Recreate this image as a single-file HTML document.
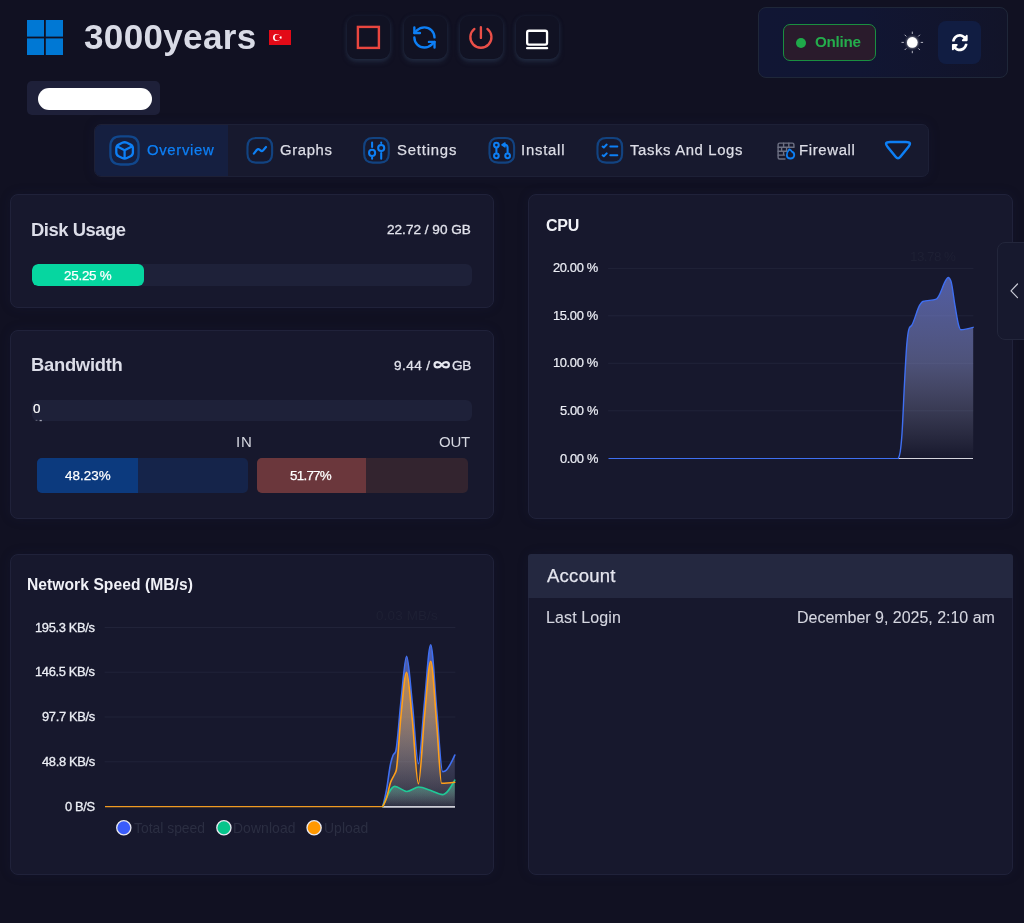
<!DOCTYPE html>
<html lang="en">
<head>
<meta charset="utf-8">
<title>3000years</title>
<style>
*{box-sizing:border-box;margin:0;padding:0}
html,body{width:1024px;height:923px;overflow:hidden}
body{background:#111122;font-family:"Liberation Sans",sans-serif;color:#dcdde8;position:relative}
.abs{position:absolute}
.card{z-index:0}.track{z-index:1}#ov{z-index:2}.t{z-index:3}
.t{position:absolute;white-space:nowrap;line-height:1;will-change:transform}
.card{position:absolute;background:#17182d;border:1px solid #20223a;border-radius:8px;box-shadow:0 0 12px rgba(28,36,78,.16)}
/* header */
#logo{left:27px;top:20px;width:36px;height:35px}
#flag{left:269px;top:30px;width:22px;height:15px}
.hbtn{position:absolute;top:16px;width:43px;height:43px;border-radius:9px;background:#111223;box-shadow:0 3px 5px 0 rgba(46,62,88,.5),0 0 4px rgba(46,62,88,.3)}
.hbtn svg{position:absolute;left:0;top:0}
#ipbox{left:27px;top:81px;width:133px;height:34px;background:#1e2039;border-radius:5px}
#ipblob{left:38px;top:88px;width:114px;height:22px;background:#fff;border-radius:11px}
#rpanel{left:758px;top:7px;width:250px;height:71px;border-radius:8px;border:1px solid #1f2739;background:linear-gradient(90deg,#111634 0%,#111633 40%,#121429 100%)}
#online{left:782.5px;top:24px;width:93.5px;height:37px;border:1px solid #1a8f40;border-radius:7px;background:#2a1b2c}
#odot{left:796px;top:37.5px;width:10px;height:10px;border-radius:50%;background:#1fa94a}
#refbtn{left:938px;top:21px;width:43px;height:43px;border-radius:8px;background:#111d42}
/* nav */
#nav{left:94px;top:124px;width:835px;height:53px;border-radius:7px;background:#17192e;border:1px solid #1d2036;overflow:hidden;box-shadow:0 0 12px rgba(28,36,78,.18)}
#navact{left:0;top:0;width:133px;height:53px;background:#151f40}
/* cards */
.track{position:absolute;background:#1e2139;border-radius:6px;overflow:hidden}
</style>
</head>
<body>

<!-- ===== header ===== -->
<svg id="logo" class="abs" viewBox="0 0 36 35"><g fill="#0078d4"><rect x="0" y="0" width="17" height="16.6"/><rect x="18.8" y="0" width="17.2" height="16.6"/><rect x="0" y="18.4" width="17" height="16.6"/><rect x="18.8" y="18.4" width="17.2" height="16.6"/></g></svg>
<svg id="flag" class="abs" viewBox="0 0 22 15"><rect width="22" height="15" fill="#e30a17"/><circle cx="7.6" cy="7.5" r="3.6" fill="#fff"/><circle cx="8.6" cy="7.5" r="2.9" fill="#e30a17"/><path d="M9.95 7.50 L11.13 7.09 L11.16 5.84 L11.92 6.83 L13.12 6.47 L12.40 7.50 L13.12 8.53 L11.92 8.17 L11.16 9.16 L11.13 7.91Z" fill="#fff"/></svg>

<div class="hbtn" style="left:347px"><svg width="43" height="43" viewBox="0 0 43 43"><rect x="10.9" y="10.9" width="21" height="21" fill="none" stroke="#e9463f" stroke-width="2.4"/></svg></div>
<div class="hbtn" style="left:403.5px"><svg width="43" height="43" viewBox="0 0 43 43"></svg></div>
<div class="hbtn" style="left:459.5px"><svg width="43" height="43" viewBox="0 0 43 43"></svg></div>
<div class="hbtn" style="left:516px"><svg width="43" height="43" viewBox="0 0 43 43"></svg></div>

<div id="ipbox" class="abs"></div>
<div id="ipblob" class="abs"></div>

<div id="rpanel" class="abs"></div>
<div id="online" class="abs"></div>
<div id="odot" class="abs"></div>
<div id="refbtn" class="abs"></div>

<!-- ===== nav ===== -->
<div id="nav" class="abs"><div id="navact" class="abs"></div></div>

<!-- ===== disk card ===== -->
<div class="card" style="left:10px;top:194px;width:484px;height:114px"></div>
<div class="track" style="left:32px;top:264px;width:439.5px;height:22px"><div class="abs" style="left:0;top:0;width:111.5px;height:22px;background:#06d6a0;border-radius:6px"></div></div>

<!-- ===== bandwidth card ===== -->
<div class="card" style="left:10px;top:330px;width:484px;height:189px"></div>
<div class="track" style="left:32px;top:399.5px;width:439.5px;height:21.5px"></div>
<div class="track" style="left:37px;top:458px;width:211px;height:34.5px;background:#15244a;border-radius:5px"><div class="abs" style="left:0;top:0;width:101px;height:100%;background:#0c3a7e"></div></div>
<div class="track" style="left:256.5px;top:458px;width:211px;height:34.5px;background:#33242f;border-radius:5px"><div class="abs" style="left:0;top:0;width:109.5px;height:100%;background:#6b373c"></div></div>

<!-- ===== cpu card ===== -->
<div class="card" style="left:528px;top:194px;width:484.5px;height:325px"></div>

<!-- ===== network card ===== -->
<div class="card" style="left:10px;top:554px;width:484px;height:321px"></div>

<!-- ===== account card ===== -->
<div class="card" style="left:528px;top:554px;width:484.5px;height:321px"></div>
<div class="track" style="left:528px;top:553.8px;width:484.5px;height:43.8px;background:#242840;border-radius:3px 3px 0 0"></div>

<svg id="ov" class="abs" style="left:0;top:0" width="1024" height="923" viewBox="0 0 1024 923" fill="none" stroke-linecap="round" stroke-linejoin="round">
<g transform="translate(411.0,24.0) scale(1.12)" stroke="#0d7ff5" stroke-width="2.1"><path d="M21 12a9 9 0 0 0-9-9 9.75 9.75 0 0 0-6.74 2.74L3 8"/><path d="M3 3v5h5"/><path d="M3 12a9 9 0 0 0 9 9 9.75 9.75 0 0 0 6.74-2.74L21 16"/><path d="M16 16h5v5"/></g>
<path d="M487.40 28.89 A10.55 10.55 0 1 1 474.40 28.89" stroke="#ea4f48" stroke-width="2.35"/><path d="M480.9 27.1 V37.900000000000006" stroke="#ea4f48" stroke-width="2.35"/>
<rect x="527.15" y="30.75" width="19.9" height="13.9" rx="1.8" stroke="#fff" stroke-width="2.3"/><path d="M527.1 48.2 H547.1" stroke="#fff" stroke-width="2.3"/>
<circle cx="912.3" cy="42.4" r="5.3" fill="#fff" stroke="none" style="filter:drop-shadow(0 0 1.5px rgba(255,255,255,.8))"/><g stroke="#e8e8f0" stroke-opacity=".8" stroke-width="0.95"><path d="M921.10 42.40 L922.70 42.40"/><path d="M918.52 48.62 L919.65 49.75"/><path d="M912.30 51.20 L912.30 52.80"/><path d="M906.08 48.62 L904.95 49.75"/><path d="M903.50 42.40 L901.90 42.40"/><path d="M906.08 36.18 L904.95 35.05"/><path d="M912.30 33.60 L912.30 32.00"/><path d="M918.52 36.18 L919.65 35.05"/></g>
<g id="ref" transform="translate(951.68,33.64) scale(0.0317,0.035)" fill="#fff" stroke="none"><path d="M370.72 133.28C339.458 104.008 298.888 87.962 255.848 88c-77.458.068-144.328 53.178-162.791 126.85-1.344 5.363-6.122 9.15-11.651 9.15H24.103c-7.498 0-13.194-6.807-11.807-14.176C33.933 94.924 134.813 8 256 8c66.448 0 126.791 26.136 171.315 68.685L463.03 40.97C478.149 25.851 504 36.559 504 57.941V192c0 13.255-10.745 24-24 24H345.941c-21.382 0-32.09-25.851-16.971-40.971l41.75-41.749zM32 296h134.059c21.382 0 32.09 25.851 16.971 40.971l-41.75 41.75c31.262 29.273 71.835 45.319 114.876 45.28 77.418-.07 144.315-53.144 162.787-126.849 1.344-5.363 6.122-9.15 11.651-9.15h57.304c7.498 0 13.194 6.807 11.807 14.176C478.067 417.076 377.187 504 256 504c-66.448 0-126.791-26.136-171.315-68.685L48.97 471.03C33.851 486.149 8 475.441 8 454.059V320c0-13.255 10.745-24 24-24z"/></g>
<!--NAV-->
<path d="M110.40 146.45 C110.40 139.75 113.85 136.30 120.55 136.30 H128.45 C135.15 136.30 138.60 139.75 138.60 146.45 V154.35 C138.60 161.05 135.15 164.50 128.45 164.50 H120.55 C113.85 164.50 110.40 161.05 110.40 154.35 Z" stroke="#0d7ff5" stroke-opacity=".42" stroke-width="2.3"/>
<path d="M122.26 142.84 Q124.60 141.70 126.94 142.84 L130.56 144.61 Q132.90 145.75 132.90 148.35 L132.90 152.45 Q132.90 155.05 130.56 156.19 L126.94 157.96 Q124.60 159.10 122.26 157.96 L118.64 156.19 Q116.30 155.05 116.30 152.45 L116.30 148.35 Q116.30 145.75 118.64 144.61 Z M116.90 146.15 L124.6 150.20000000000002 L132.30 146.15 M124.6 150.20000000000002 V158.70" stroke="#0d7ff5" stroke-width="2.3"/>
<path d="M247.48 146.85 C247.48 140.99 250.49 137.98 256.35 137.98 H263.25 C269.11 137.98 272.12 140.99 272.12 146.85 V153.75 C272.12 159.61 269.11 162.62 263.25 162.62 H256.35 C250.49 162.62 247.48 159.61 247.48 153.75 Z" stroke="#0d7ff5" stroke-opacity=".42" stroke-width="2.1"/>
<path d="M253.9 153.7 L256.7 150 Q258 148.3 259.5 149.6 L260.4 150.4 Q261.8 151.7 263.2 150.2 L266 147" stroke="#0d7ff5" stroke-width="2.2"/>
<path d="M364.12 146.85 C364.12 140.99 367.14 137.98 373.00 137.98 H379.90 C385.76 137.98 388.77 140.99 388.77 146.85 V153.75 C388.77 159.61 385.76 162.62 379.90 162.62 H373.00 C367.14 162.62 364.12 159.61 364.12 153.75 Z" stroke="#0d7ff5" stroke-opacity=".42" stroke-width="2.1"/>
<g stroke="#0d7ff5" stroke-width="2.05"><path d="M372.1 142.4 V147 M372.1 157.6 V158.7"/><circle cx="372.1" cy="152.9" r="3.05"/><path d="M381.2 142.4 V143 M381.2 153 V158.7"/><circle cx="381.2" cy="148" r="3.05"/></g>
<path d="M489.48 146.85 C489.48 140.99 492.49 137.98 498.35 137.98 H505.25 C511.11 137.98 514.12 140.99 514.12 146.85 V153.75 C514.12 159.61 511.11 162.62 505.25 162.62 H498.35 C492.49 162.62 489.48 159.61 489.48 153.75 Z" stroke="#0d7ff5" stroke-opacity=".42" stroke-width="2.1"/>
<g stroke="#0d7ff5" stroke-width="2.05"><circle cx="496.4" cy="145.1" r="2.35"/><circle cx="496.4" cy="155.8" r="2.35"/><path d="M496.4 148.4 V152.6"/><circle cx="507.6" cy="155.8" r="2.35"/><path d="M507.6 152.6 V147.6 Q507.6 144.8 504.9 144.8 H504"/><path d="M505 142.9 L501.9 144.8 L505 146.9 Z" fill="#0d7ff5" stroke-width="1.4"/></g>
<path d="M597.47 146.85 C597.47 140.99 600.49 137.98 606.35 137.98 H613.25 C619.11 137.98 622.12 140.99 622.12 146.85 V153.75 C622.12 159.61 619.11 162.62 613.25 162.62 H606.35 C600.49 162.62 597.47 159.61 597.47 153.75 Z" stroke="#0d7ff5" stroke-opacity=".42" stroke-width="2.1"/>
<g stroke="#0d7ff5" stroke-width="2.05"><path d="M602.6 146.5 L603.8 147.4 L606.7 144.6 M610.3 146.5 H617.3 M602.6 155.3 L603.8 156.3 L606.7 153.4 M610.3 155.3 H617.3"/></g>
<!--/NAV-->
<g stroke="#6d7082" stroke-width="1.4"><path d="M785 159 H779.6 Q778.1 159 778.1 157.5 V144.6 Q778.1 143.1 779.6 143.1 H792.4 Q793.9 143.1 793.9 144.6 V147"/><path d="M778.1 147.2 H793.9 M778.1 151.2 H787 M778.1 155.1 H784.5 M783.6 143.1 V147.2 M788.8 143.1 V147.2 M781.6 147.2 V151.2 M786.6 147.2 V151.2 M783.6 151.2 V155.1"/></g>
<path id="flame" d="M789.3 149.3 Q791.3 150.3 791.9 151.6 Q794.6 152.6 794.2 155.6 Q793.7 158.5 790.5 158.5 Q787.1 158.5 786.8 155.4 Q786.6 152.6 789.3 149.3 Z" stroke="#0d7ff5" stroke-width="1.8" fill="#17192e"/>
<path id="tri" d="M887.67 146.96 Q883.60 141.90 890.10 141.90 L905.90 141.90 Q912.40 141.90 908.33 146.96 L900.38 156.84 Q898.00 159.80 895.62 156.84 Z" stroke="#0d7ff5" stroke-width="2.5"/>
<path id="inf" d="M441.7 364.8 C439.9 362.3 438.6 362.2 437.4 362.2 C435.6 362.2 434.5 363.4 434.5 364.8 C434.5 366.2 435.6 367.4 437.4 367.4 C438.6 367.4 439.9 367.3 441.7 364.8 C443.5 362.3 444.8 362.2 446 362.2 C447.8 362.2 448.9 363.4 448.9 364.8 C448.9 366.2 447.8 367.4 446 367.4 C444.8 367.4 443.5 367.3 441.7 364.8 Z" stroke="#e6e7ef" stroke-width="2.2"/>
<g id="pdots" stroke="none"><rect x="35.6" y="419.8" width="1.8" height="1.2" fill="#8a8ca0" opacity=".55"/><rect x="39.6" y="419.9" width="2.2" height="1.3" fill="#c8c9d6" opacity=".8"/></g>
<!--CHARTS-->
<path d="M608.5 268.4 H973" stroke="#212339" stroke-width="1"/>
<path d="M608.5 315.8 H973" stroke="#212339" stroke-width="1"/>
<path d="M608.5 363.3 H973" stroke="#212339" stroke-width="1"/>
<path d="M608.5 410.8 H973" stroke="#212339" stroke-width="1"/>
<defs><linearGradient id="gc" x1="0" y1="277" x2="0" y2="458.5" gradientUnits="userSpaceOnUse"><stop offset="0" stop-color="#6f80e0" stop-opacity=".66"/><stop offset=".45" stop-color="#8f98d8" stop-opacity=".46"/><stop offset="1" stop-color="#c8c8dc" stop-opacity=".0"/></linearGradient></defs>
<path d="M898.20 458.50 C898.87 457.42 899.53 456.33 900.20 452.00 C900.80 448.10 901.40 442.50 902.00 433.80 C902.80 422.21 903.60 399.90 904.40 385.00 C905.20 370.10 906.00 353.88 906.80 344.40 C907.63 334.53 908.47 329.81 909.30 328.00 C910.07 326.33 910.83 326.57 911.60 325.50 C914.33 321.68 917.07 309.17 919.80 305.00 C920.80 303.48 921.80 301.84 922.80 301.50 C927.28 299.97 931.77 300.73 936.25 299.20 C937.03 298.93 937.82 297.45 938.60 296.30 C941.07 292.68 943.53 283.41 946.00 280.00 C946.73 278.99 947.47 277.50 948.20 277.50 C949.10 277.50 950.00 278.67 950.90 281.00 C952.27 284.54 953.63 297.94 955.00 305.60 C956.33 313.08 957.67 322.60 959.00 326.50 C959.53 328.06 960.07 329.70 960.60 329.70 C964.80 329.70 969.00 328.50 973.20 327.30 V458.5 H898.2 Z" fill="url(#gc)" stroke="none"/>
<path d="M898.2 458.5 H973" stroke="#d4d4dc" stroke-width="1.2" stroke-linecap="butt"/>
<path d="M608.5 458.5 H898.2" stroke="#3f6ff2" stroke-width="1.1" stroke-linecap="butt"/>
<path d="M898.20 458.50 C898.87 457.42 899.53 456.33 900.20 452.00 C900.80 448.10 901.40 442.50 902.00 433.80 C902.80 422.21 903.60 399.90 904.40 385.00 C905.20 370.10 906.00 353.88 906.80 344.40 C907.63 334.53 908.47 329.81 909.30 328.00 C910.07 326.33 910.83 326.57 911.60 325.50 C914.33 321.68 917.07 309.17 919.80 305.00 C920.80 303.48 921.80 301.84 922.80 301.50 C927.28 299.97 931.77 300.73 936.25 299.20 C937.03 298.93 937.82 297.45 938.60 296.30 C941.07 292.68 943.53 283.41 946.00 280.00 C946.73 278.99 947.47 277.50 948.20 277.50 C949.10 277.50 950.00 278.67 950.90 281.00 C952.27 284.54 953.63 297.94 955.00 305.60 C956.33 313.08 957.67 322.60 959.00 326.50 C959.53 328.06 960.07 329.70 960.60 329.70 C964.80 329.70 969.00 328.50 973.20 327.30" stroke="#3f6ff2" stroke-width="1.4"/>
<path d="M105 627.5 H455" stroke="#212339" stroke-width="1"/>
<path d="M105 672.2 H455" stroke="#212339" stroke-width="1"/>
<path d="M105 717 H455" stroke="#212339" stroke-width="1"/>
<path d="M105 761.8 H455" stroke="#212339" stroke-width="1"/>
<defs><linearGradient id="gb" x1="0" y1="644" x2="0" y2="806" gradientUnits="userSpaceOnUse"><stop offset="0" stop-color="#5f78e8" stop-opacity=".75"/><stop offset="1" stop-color="#c0c0d8" stop-opacity=".05"/></linearGradient><linearGradient id="go" x1="0" y1="661" x2="0" y2="806" gradientUnits="userSpaceOnUse"><stop offset="0" stop-color="#f59a1a" stop-opacity=".75"/><stop offset="1" stop-color="#c8c0c0" stop-opacity=".05"/></linearGradient><linearGradient id="gg" x1="0" y1="780" x2="0" y2="806" gradientUnits="userSpaceOnUse"><stop offset="0" stop-color="#20c997" stop-opacity=".6"/><stop offset="1" stop-color="#b0c8c0" stop-opacity=".05"/></linearGradient></defs>
<path d="M382.80 806.60 C384.03 801.63 385.27 796.66 386.50 790.00 C387.87 782.62 389.23 769.88 390.60 763.70 C391.40 760.08 392.20 757.52 393.00 755.50 C393.90 753.23 394.80 754.13 395.70 751.40 C397.43 746.14 399.17 717.24 400.90 702.00 C402.80 685.29 404.70 656.30 406.60 656.30 C408.47 656.30 410.33 685.18 412.20 702.00 C414.27 720.62 416.33 763.70 418.40 763.70 C420.43 763.70 422.47 721.67 424.50 702.00 C426.57 682.01 428.63 644.80 430.70 644.80 C432.77 644.80 434.83 690.32 436.90 712.30 C438.80 732.51 440.70 771.60 442.60 771.60 C443.43 771.60 444.27 771.40 445.10 771.00 C448.33 769.45 451.57 762.27 454.80 755.10 V806.6 H382.8 Z" fill="url(#gb)" stroke="none"/>
<path d="M382.80 806.60 C386.80 796.50 390.80 786.40 394.80 786.40 C398.80 786.40 402.80 791.50 406.80 791.50 C410.80 791.50 414.80 787.00 418.80 787.00 C422.80 787.00 426.80 789.23 430.80 790.50 C434.80 791.77 438.80 794.60 442.80 794.60 C446.80 794.60 450.80 787.40 454.80 780.20 V806.6 H382.8 Z" fill="url(#gg)" stroke="none"/>
<path d="M382.80 806.60 C384.03 804.17 385.27 801.75 386.50 798.00 C387.87 793.85 389.23 786.30 390.60 782.30 C391.97 778.30 393.33 777.23 394.70 774.00 C395.23 772.74 395.77 772.59 396.30 770.00 C397.83 762.55 399.37 731.60 400.90 716.40 C402.80 697.57 404.70 672.20 406.60 672.20 C408.47 672.20 410.33 701.07 412.20 718.50 C414.27 737.79 416.33 783.70 418.40 783.70 C420.43 783.70 422.47 736.67 424.50 716.40 C426.57 695.80 428.63 661.30 430.70 661.30 C432.77 661.30 434.83 703.14 436.90 726.70 C438.47 744.56 440.03 783.30 441.60 783.30 C446.00 783.30 450.40 782.80 454.80 782.30 V806.6 H382.8 Z" fill="url(#go)" stroke="none"/>
<path d="M382.8 806.9 H455" stroke="#cfcfd8" stroke-width="1.8" stroke-linecap="butt"/>
<path d="M105 806.6 H382.8" stroke="#f09a22" stroke-width="1.1" stroke-linecap="butt"/>
<path d="M382.80 806.60 C384.03 801.63 385.27 796.66 386.50 790.00 C387.87 782.62 389.23 769.88 390.60 763.70 C391.40 760.08 392.20 757.52 393.00 755.50 C393.90 753.23 394.80 754.13 395.70 751.40 C397.43 746.14 399.17 717.24 400.90 702.00 C402.80 685.29 404.70 656.30 406.60 656.30 C408.47 656.30 410.33 685.18 412.20 702.00 C414.27 720.62 416.33 763.70 418.40 763.70 C420.43 763.70 422.47 721.67 424.50 702.00 C426.57 682.01 428.63 644.80 430.70 644.80 C432.77 644.80 434.83 690.32 436.90 712.30 C438.80 732.51 440.70 771.60 442.60 771.60 C443.43 771.60 444.27 771.40 445.10 771.00 C448.33 769.45 451.57 762.27 454.80 755.10" stroke="#3f6ff2" stroke-width="1.6"/>
<path d="M382.80 806.60 C386.80 796.50 390.80 786.40 394.80 786.40 C398.80 786.40 402.80 791.50 406.80 791.50 C410.80 791.50 414.80 787.00 418.80 787.00 C422.80 787.00 426.80 789.23 430.80 790.50 C434.80 791.77 438.80 794.60 442.80 794.60 C446.80 794.60 450.80 787.40 454.80 780.20" stroke="#20c997" stroke-width="1.6"/>
<path d="M382.80 806.60 C384.03 804.17 385.27 801.75 386.50 798.00 C387.87 793.85 389.23 786.30 390.60 782.30 C391.97 778.30 393.33 777.23 394.70 774.00 C395.23 772.74 395.77 772.59 396.30 770.00 C397.83 762.55 399.37 731.60 400.90 716.40 C402.80 697.57 404.70 672.20 406.60 672.20 C408.47 672.20 410.33 701.07 412.20 718.50 C414.27 737.79 416.33 783.70 418.40 783.70 C420.43 783.70 422.47 736.67 424.50 716.40 C426.57 695.80 428.63 661.30 430.70 661.30 C432.77 661.30 434.83 703.14 436.90 726.70 C438.47 744.56 440.03 783.30 441.60 783.30 C446.00 783.30 450.40 782.80 454.80 782.30" stroke="#ff9f1a" stroke-width="1.6"/>
<circle cx="123.8" cy="827.8" r="7.1" fill="#3a5cfb" stroke="#e8e8f0" stroke-width="1.3"/>
<circle cx="223.9" cy="827.8" r="7.1" fill="#06c58b" stroke="#e8e8f0" stroke-width="1.3"/>
<circle cx="314.1" cy="827.8" r="7.1" fill="#ff9800" stroke="#e8e8f0" stroke-width="1.3"/>
<!--/CHARTS-->
</svg>
<!--TEXT-->
<div class="t" id="title" style="left:83.60px;top:19.26px;font-size:35px;color:#d9dbe6;letter-spacing:0.353px;font-weight:bold">3000years</div>
<div class="t" id="otext" style="left:815.40px;top:34.21px;font-size:15.2px;color:#24ad4c;letter-spacing:-0.241px;font-weight:bold">Online</div>
<div class="t" id="n1" style="left:146.90px;top:143.01px;font-size:14.9px;color:#0d7ff5;letter-spacing:0.657px;-webkit-text-stroke:0.25px #0d7ff5">Overview</div>
<div class="t" id="n2" style="left:279.70px;top:143.01px;font-size:14.9px;color:#dcdde6;letter-spacing:0.623px;-webkit-text-stroke:0.25px #dcdde6">Graphs</div>
<div class="t" id="n3" style="left:397.00px;top:143.01px;font-size:14.9px;color:#dcdde6;letter-spacing:0.792px;-webkit-text-stroke:0.25px #dcdde6">Settings</div>
<div class="t" id="n4" style="left:520.70px;top:143.01px;font-size:14.9px;color:#dcdde6;letter-spacing:0.768px;-webkit-text-stroke:0.25px #dcdde6">Install</div>
<div class="t" id="n5" style="left:630.00px;top:143.01px;font-size:14.9px;color:#dcdde6;letter-spacing:0.625px;-webkit-text-stroke:0.25px #dcdde6">Tasks And Logs</div>
<div class="t" id="n6" style="left:798.70px;top:143.01px;font-size:14.9px;color:#dcdde6;letter-spacing:0.652px;-webkit-text-stroke:0.25px #dcdde6">Firewall</div>
<div class="t" id="dtitle" style="left:31.20px;top:220.81px;font-size:18.4px;color:#dcdde8;letter-spacing:-0.459px;font-weight:bold">Disk Usage</div>
<div class="t" id="dval" style="left:387.40px;top:222.91px;font-size:13.6px;color:#e2e3ec;letter-spacing:-0.002px;-webkit-text-stroke:0.3px #e2e3ec">22.72 / 90 GB</div>
<div class="t" id="dpct" style="left:63.90px;top:268.50px;font-size:13.4px;color:#ffffff;letter-spacing:-0.238px;-webkit-text-stroke:0.25px #ffffff">25.25 %</div>
<div class="t" id="btitle" style="left:31.20px;top:355.91px;font-size:18.4px;color:#dcdde8;letter-spacing:-0.281px;font-weight:bold">Bandwidth</div>
<div class="t" id="bval1" style="left:393.80px;top:358.91px;font-size:13.6px;color:#e2e3ec;letter-spacing:0.413px;-webkit-text-stroke:0.3px #e2e3ec">9.44 /</div>
<div class="t" id="bval2" style="left:451.93px;top:358.91px;font-size:13.6px;color:#e2e3ec;letter-spacing:-0.300px;-webkit-text-stroke:0.3px #e2e3ec">GB</div>
<div class="t" id="bzero" style="left:33.20px;top:401.50px;font-size:13.4px;color:#ffffff;letter-spacing:0.000px;-webkit-text-stroke:0.2px #ffffff">0</div>
<div class="t" id="tin" style="left:235.83px;top:434.31px;font-size:15px;color:#d5d7e0;letter-spacing:0.800px">IN</div>
<div class="t" id="tout" style="left:438.70px;top:434.31px;font-size:15px;color:#d5d7e0;letter-spacing:-0.200px">OUT</div>
<div class="t" id="pin" style="left:64.50px;top:468.80px;font-size:13.4px;color:#ffffff;letter-spacing:0.038px;-webkit-text-stroke:0.25px #ffffff">48.23%</div>
<div class="t" id="pout" style="left:289.80px;top:468.80px;font-size:13.4px;color:#ffffff;letter-spacing:-0.742px;-webkit-text-stroke:0.25px #ffffff">51.77%</div>
<div class="t" id="cputitle" style="left:545.77px;top:217.70px;font-size:16px;color:#f0f1f7;letter-spacing:-0.300px;font-weight:bold">CPU</div>
<div class="t" id="nettitle" style="left:27.40px;top:576.62px;font-size:15.6px;color:#f0f1f7;letter-spacing:0.067px;font-weight:bold">Network Speed (MB/s)</div>
<div class="t" id="acct" style="left:547.00px;top:567.10px;font-size:18.5px;color:#e4e5ee;letter-spacing:0.266px;-webkit-text-stroke:0.25px #e4e5ee">Account</div>
<div class="t" id="ll" style="left:546.00px;top:610.11px;font-size:16px;color:#d5d6e0;letter-spacing:0.118px;-webkit-text-stroke:0.1px #d5d6e0">Last Login</div>
<div class="t" id="lld" style="left:797.00px;top:610.11px;font-size:16px;color:#d5d6e0;letter-spacing:-0.021px;-webkit-text-stroke:0.1px #d5d6e0">December 9, 2025, 2:10 am</div>
<div class="t" id="lg0" style="left:134.20px;top:821.61px;font-size:13.9px;color:#2b2e42;letter-spacing:-0.002px">Total speed</div>
<div class="t" id="lg1" style="left:233.00px;top:821.61px;font-size:13.9px;color:#2b2e42;letter-spacing:0.093px">Download</div>
<div class="t" id="lg2" style="left:323.80px;top:821.61px;font-size:13.9px;color:#2b2e42;letter-spacing:0.061px">Upload</div>
<div class="t" id="cputip" style="left:910.00px;top:250.00px;font-size:13.4px;color:#1e2034;letter-spacing:-0.538px">13.78 %</div>
<div class="t" id="nettip" style="left:376.00px;top:609.30px;font-size:13.4px;color:#1e2034;letter-spacing:0.176px">0.03 MB/s</div>
<div class="t" id="cy0" style="left:553.10px;top:262.31px;font-size:12.9px;color:#eceef5;letter-spacing:-0.357px;-webkit-text-stroke:0.2px #eceef5">20.00 %</div>
<div class="t" id="cy1" style="left:553.10px;top:309.91px;font-size:12.9px;color:#eceef5;letter-spacing:-0.357px;-webkit-text-stroke:0.2px #eceef5">15.00 %</div>
<div class="t" id="cy2" style="left:553.10px;top:357.41px;font-size:12.9px;color:#eceef5;letter-spacing:-0.357px;-webkit-text-stroke:0.2px #eceef5">10.00 %</div>
<div class="t" id="cy3" style="left:559.91px;top:404.91px;font-size:12.9px;color:#eceef5;letter-spacing:-0.357px;-webkit-text-stroke:0.2px #eceef5">5.00 %</div>
<div class="t" id="cy4" style="left:559.91px;top:452.61px;font-size:12.9px;color:#eceef5;letter-spacing:-0.357px;-webkit-text-stroke:0.2px #eceef5">0.00 %</div>
<div class="t" id="ny0" style="left:34.90px;top:621.71px;font-size:12.9px;color:#eceef5;letter-spacing:-0.346px;-webkit-text-stroke:0.3px #eceef5">195.3 KB/s</div>
<div class="t" id="ny1" style="left:34.90px;top:666.31px;font-size:12.9px;color:#eceef5;letter-spacing:-0.346px;-webkit-text-stroke:0.3px #eceef5">146.5 KB/s</div>
<div class="t" id="ny2" style="left:41.72px;top:711.11px;font-size:12.9px;color:#eceef5;letter-spacing:-0.346px;-webkit-text-stroke:0.3px #eceef5">97.7 KB/s</div>
<div class="t" id="ny3" style="left:41.72px;top:755.91px;font-size:12.9px;color:#eceef5;letter-spacing:-0.346px;-webkit-text-stroke:0.3px #eceef5">48.8 KB/s</div>
<div class="t" id="ny4" style="left:64.86px;top:800.71px;font-size:12.9px;color:#eceef5;letter-spacing:-0.346px;-webkit-text-stroke:0.3px #eceef5">0 B/S</div>
<!--/TEXT-->
<!-- side toggle -->
<div class="abs" style="left:996.5px;top:241.5px;width:40px;height:98px;border:1px solid #23263b;border-radius:8px;background:#17192e"></div>
<svg class="abs" style="left:1006px;top:280px" width="16" height="22" viewBox="0 0 16 22"><path d="M11.5 4 L5 10.8 L11.5 17.6" fill="none" stroke="#c9cbd6" stroke-width="1.2" stroke-linecap="round" stroke-linejoin="round"/></svg>

</body>
</html>
